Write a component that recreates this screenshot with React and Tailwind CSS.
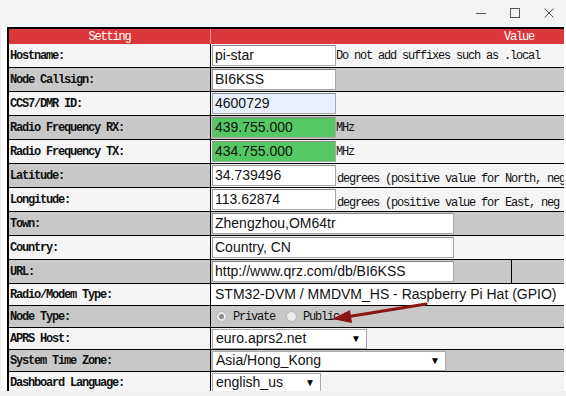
import React from 'react';

const mono = { fontFamily: '"Liberation Mono", "DejaVu Sans Mono", monospace' };
const sans = { fontFamily: '"Liberation Sans", Arial, sans-serif' };

function Label({ children }) {
  return (
    <span className="text-[12px] font-bold tracking-[-1.2px] text-[#111]" style={mono}>
      {children}
    </span>
  );
}

function Note({ children }) {
  return (
    <span className="whitespace-nowrap text-[12px] tracking-[-1.2px] text-[#111]" style={mono}>
      {children}
    </span>
  );
}

function TextBox({ value, w = 'w-[124px]', bg = 'bg-white' }) {
  return (
    <div
      className={`${w} ${bg} h-[21px] shrink-0 border border-[#a9a9a9] border-t-[#8a8a8a] border-l-[#9a9a9a] pl-[2px] text-[14px] leading-[19px] text-[#111] whitespace-nowrap overflow-hidden`}
      style={sans}
    >
      {value}
    </div>
  );
}

function Select({ value, w }) {
  return (
    <div
      className={`${w} h-[20px] shrink-0 bg-white border border-[#a9a9a9] flex items-center justify-between pl-[3px] pr-[5px] text-[14px] text-[#111]`}
      style={sans}
    >
      <span className="whitespace-nowrap">{value}</span>
      <span className="text-[10px] text-black">▼</span>
    </div>
  );
}

function Row({ label, gray, h = 'h-[24px]', rightBg, children }) {
  const bg = gray ? 'bg-[#c8c8c8]' : 'bg-[#f4f4f4]';
  return (
    <div className={`flex ${h} border-b border-black`}>
      <div className={`w-[202px] shrink-0 ${bg} border-r border-black flex items-center pl-[1px]`}>
        <Label>{label}</Label>
      </div>
      <div className={`flex-1 ${rightBg || bg} flex items-center pl-[1px] overflow-hidden`}>{children}</div>
    </div>
  );
}

function Radio({ checked, className = '' }) {
  return (
    <span className={`w-[11px] h-[11px] shrink-0 rounded-full border border-[#b5b5b5] bg-[#eaeaea] flex items-center justify-center ${className}`}>
      {checked && <span className="w-[5px] h-[5px] rounded-full bg-[#8c8c8c]" />}
    </span>
  );
}

export default function App() {
  return (
    <div className="w-[566px] h-[396px] overflow-hidden bg-[#f3f3f3] flex flex-col">
      {/* window chrome */}
      <div className="h-[25px] shrink-0 flex items-center justify-end pr-[12px] gap-[24px]">
        <svg width="10" height="10" viewBox="0 0 10 10"><path d="M0 5.5h10" stroke="#555" strokeWidth="1" /></svg>
        <svg width="10" height="10" viewBox="0 0 10 10"><rect x="0.5" y="0.5" width="9" height="9" fill="none" stroke="#555" /></svg>
        <svg width="10" height="10" viewBox="0 0 10 10"><path d="M0.5 0.5l9 9M9.5 0.5l-9 9" stroke="#555" /></svg>
      </div>

      <div className="flex-1 flex pl-[2px] min-h-0">
        <div className="flex-1 bg-white pl-[5px] pt-[2px] overflow-hidden relative">
          <div className="w-[557px] border-l-2 border-t-2 border-black">
            {/* header */}
            <div className="flex h-[15px] bg-[#dc373b] text-white">
              <div className="w-[202px] shrink-0 border-r border-[#ee9a9c] flex items-center justify-center">
                <span className="text-[12px] tracking-[-1.2px]" style={mono}>Setting</span>
              </div>
              <div className="flex-1 flex items-center justify-end pr-[30px]">
                <span className="text-[12px] tracking-[-1.2px]" style={mono}>Value</span>
              </div>
            </div>

            <Row label="Hostname:">
              <TextBox value="pi-star" />
              <Note>Do not add suffixes such as .local</Note>
            </Row>
            <Row label="Node Callsign:" gray>
              <TextBox value="BI6KSS" />
            </Row>
            <Row label="CCS7/DMR ID:">
              <TextBox value="4600729" bg="bg-[#e8f0fe]" />
            </Row>
            <Row label="Radio Frequency RX:" gray>
              <TextBox value="439.755.000" bg="bg-[#55c864]" />
              <Note>MHz</Note>
            </Row>
            <Row label="Radio Frequency TX:">
              <TextBox value="434.755.000" bg="bg-[#55c864]" />
              <Note>MHz</Note>
            </Row>
            <Row label="Latitude:" gray rightBg="bg-[#f4f4f4]">
              <TextBox value="34.739496" />
              <span className="pl-[1px]"><Note>degrees (positive value for North, neg</Note></span>
            </Row>
            <Row label="Longitude:">
              <TextBox value="113.62874" />
              <span className="pl-[1px]"><Note>degrees (positive value for East, neg</Note></span>
            </Row>
            <Row label="Town:" gray>
              <TextBox value="Zhengzhou,OM64tr" w="w-[242px]" />
            </Row>
            <Row label="Country:">
              <TextBox value="Country, CN" w="w-[242px]" />
            </Row>
            <Row label="URL:" gray>
              <TextBox value="http://www.qrz.com/db/BI6KSS" w="w-[242px]" />
              <div className="w-[57px] shrink-0" />
              <div className="self-stretch w-[1px] bg-black" />
            </Row>
            <Row label="Radio/Modem Type:" h="h-[22px]" rightBg="bg-white">
              <div className="pl-[3px] text-[14px] text-[#111] whitespace-nowrap" style={sans}>
                STM32-DVM / MMDVM_HS - Raspberry Pi Hat (GPIO)
              </div>
            </Row>
            <Row label="Node Type:" gray h="h-[22px]">
              <div className="flex items-center pl-[4px] gap-[6px]">
                <Radio checked />
                <Note>Private</Note>
                <Radio className="ml-[5px]" />
                <Note>Public</Note>
              </div>
            </Row>
            <Row label="APRS Host:" h="h-[22px]">
              <Select value="euro.aprs2.net" w="w-[155px]" />
            </Row>
            <Row label="System Time Zone:" gray h="h-[22px]">
              <Select value="Asia/Hong_Kong" w="w-[234px]" />
            </Row>
            <Row label="Dashboard Language:" h="h-[22px]">
              <Select value="english_us" w="w-[109px]" />
            </Row>
          </div>

          {/* annotation arrow */}
          <svg className="absolute left-[320px] top-[277px]" width="110" height="28" viewBox="0 0 110 28">
            <path d="M104 2 L24 15" stroke="#8b1414" strokeWidth="3" strokeLinecap="round" />
            <path d="M10 17 L28 8 L30 21 Z" fill="#8b1414" />
          </svg>
        </div>
      </div>
      <div className="h-[5px] shrink-0 bg-[#f0f0f0]" />
    </div>
  );
}
